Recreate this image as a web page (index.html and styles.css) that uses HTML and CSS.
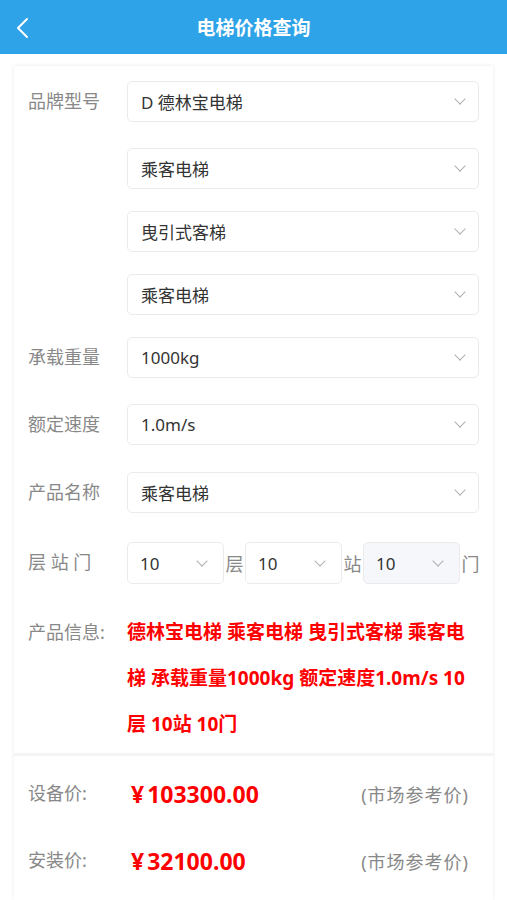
FILE: index.html
```html
<!DOCTYPE html>
<html lang="zh-CN">

  <head>
    <meta charset="UTF-8">
    <meta name="viewport" content="width=device-width, initial-scale=1.0">
    <title>电梯价格查询</title>
    <link rel="stylesheet" href="styles.css">
  </head>

  <body>
    <!-- 顶部导航 -->
    <div class="header">
      <svg class="back" width="14" height="22" viewBox="0 0 14 22">
        <path d="M12 2 L3 11 L12 20" fill="none" stroke="#fff" stroke-width="2" stroke-linecap="round" stroke-linejoin="round" />
      </svg>
      <div class="title">电梯价格查询</div>
    </div>

    <div class="card">
      <!-- 选择区 -->
      <div class="form">
        <div class="field">
          <div class="label">品牌型号</div>
          <div class="group">
            <div class="select"><span>D 德林宝电梯</span><i class="arrow"></i></div>
            <div class="select first"><span>乘客电梯</span><i class="arrow"></i></div>
            <div class="select"><span>曳引式客梯</span><i class="arrow"></i></div>
            <div class="select"><span>乘客电梯</span><i class="arrow"></i></div>
          </div>
        </div>
        <div class="field gap26">
          <div class="label">承载重量</div>
          <div class="select"><span>1000kg</span><i class="arrow"></i></div>
        </div>
        <div class="field gap27">
          <div class="label">额定速度</div>
          <div class="select"><span>1.0m/s</span><i class="arrow"></i></div>
        </div>
        <div class="field gap29">
          <div class="label">产品名称</div>
          <div class="select"><span>乘客电梯</span><i class="arrow"></i></div>
        </div>
        <div class="field gap25">
          <div class="label">层 站 门</div>
          <div class="floors">
            <div class="select small"><span>10</span><i class="arrow"></i></div>
            <span class="unit">层</span>
            <div class="select small"><span>10</span><i class="arrow"></i></div>
            <span class="unit">站</span>
            <div class="select small gray"><span>10</span><i class="arrow"></i></div>
            <span class="unit">门</span>
          </div>
        </div>
        <div class="info">
          <div class="label">产品信息:</div>
          <div class="info_text">德林宝电梯 乘客电梯 曳引式客梯 乘客电梯 承载重量1000kg 额定速度1.0m/s 10层 10站 10门</div>
        </div>
      </div>

      <!-- 价格区 -->
      <div class="prices">
        <div class="price_row">
          <div class="label">设备价:</div>
          <div class="money"><span class="yen">¥</span>103300.00</div>
          <div class="tip">(市场参考价)</div>
        </div>
        <div class="price_row">
          <div class="label">安装价:</div>
          <div class="money"><span class="yen">¥</span>32100.00</div>
          <div class="tip">(市场参考价)</div>
        </div>
      </div>
    </div>
  </body>

</html>
```

FILE: styles.css
```css
* {
  margin: 0;
  padding: 0;
  box-sizing: border-box;
}

body {
  background-color: #fff;
  font-family: "Noto Sans", "Noto Sans CJK SC", sans-serif;
  color: #333;
}

.header {
  height: 54px;
  background-color: #2ea3e7;
  display: flex;
  align-items: center;
  justify-content: center;
  position: relative;
}

.back {
  position: absolute;
  left: 15px;
  top: 17px;
}

.title {
  color: #fff;
  font-size: 19px;
  font-weight: bold;
}

.card {
  margin: 12px 14px 0;
  background-color: #fff;
  box-shadow: 0 0 4px rgba(0, 0, 0, 0.09);
}

.form {
  padding: 15px 14px 6px;
}

/* 每行的下间距不一样 */
.field {
  display: flex;
  align-items: flex-start;
  margin-bottom: 22px;
}

.gap26 {
  margin-bottom: 26px;
}

.gap27 {
  margin-bottom: 27px;
}

.gap29 {
  margin-bottom: 29px;
}

.gap25 {
  margin-bottom: 25px;
}

.label {
  width: 99px;
  flex-shrink: 0;
  font-size: 18px;
  color: #888;
  line-height: 41px;
}

.group {
  flex: 1;
  display: flex;
  flex-direction: column;
  gap: 22px;
}

.select {
  flex: 1;
  height: 41px;
  border: 1px solid #ebebeb;
  border-radius: 5px;
  background-color: #fff;
  display: flex;
  align-items: center;
  justify-content: space-between;
  padding: 0 14px 0 13px;
  font-size: 17px;
  color: #333;
}

.group .select {
  flex: none;
}

.group .first {
  margin-top: 4px;
}

.arrow {
  width: 8px;
  height: 8px;
  border-right: 1.2px solid #b0b0b0;
  border-bottom: 1.2px solid #b0b0b0;
  transform: rotate(45deg);
  margin-top: -5px;
}

.floors {
  flex: 1;
  display: flex;
  align-items: center;
}

.select.small {
  flex: none;
  width: 97px;
  height: 42px;
  padding-left: 12px;
  padding-right: 17px;
}

.select.gray {
  background-color: #f5f7fa;
}

.unit {
  font-size: 18px;
  color: #888;
  width: 21px;
  text-align: center;
}

.info {
  display: flex;
  align-items: flex-start;
}

.info .label {
  line-height: 46px;
}

.info_text {
  flex: 1;
  font-size: 19px;
  line-height: 46px;
  font-weight: bold;
  color: #f00;
}

.prices {
  border-top: 3px solid #f4f4f4;
  padding: 4px 24px 6px 14px;
}

.price_row {
  height: 67px;
  display: flex;
  align-items: center;
}

.price_row .label {
  width: 103px;
}

.money {
  flex: 1;
  font-size: 23px;
  font-weight: bold;
  color: #f00;
}

.yen {
  margin-right: 3px;
}

.tip {
  font-size: 18px;
  letter-spacing: 1px;
  color: #888;
}
```
